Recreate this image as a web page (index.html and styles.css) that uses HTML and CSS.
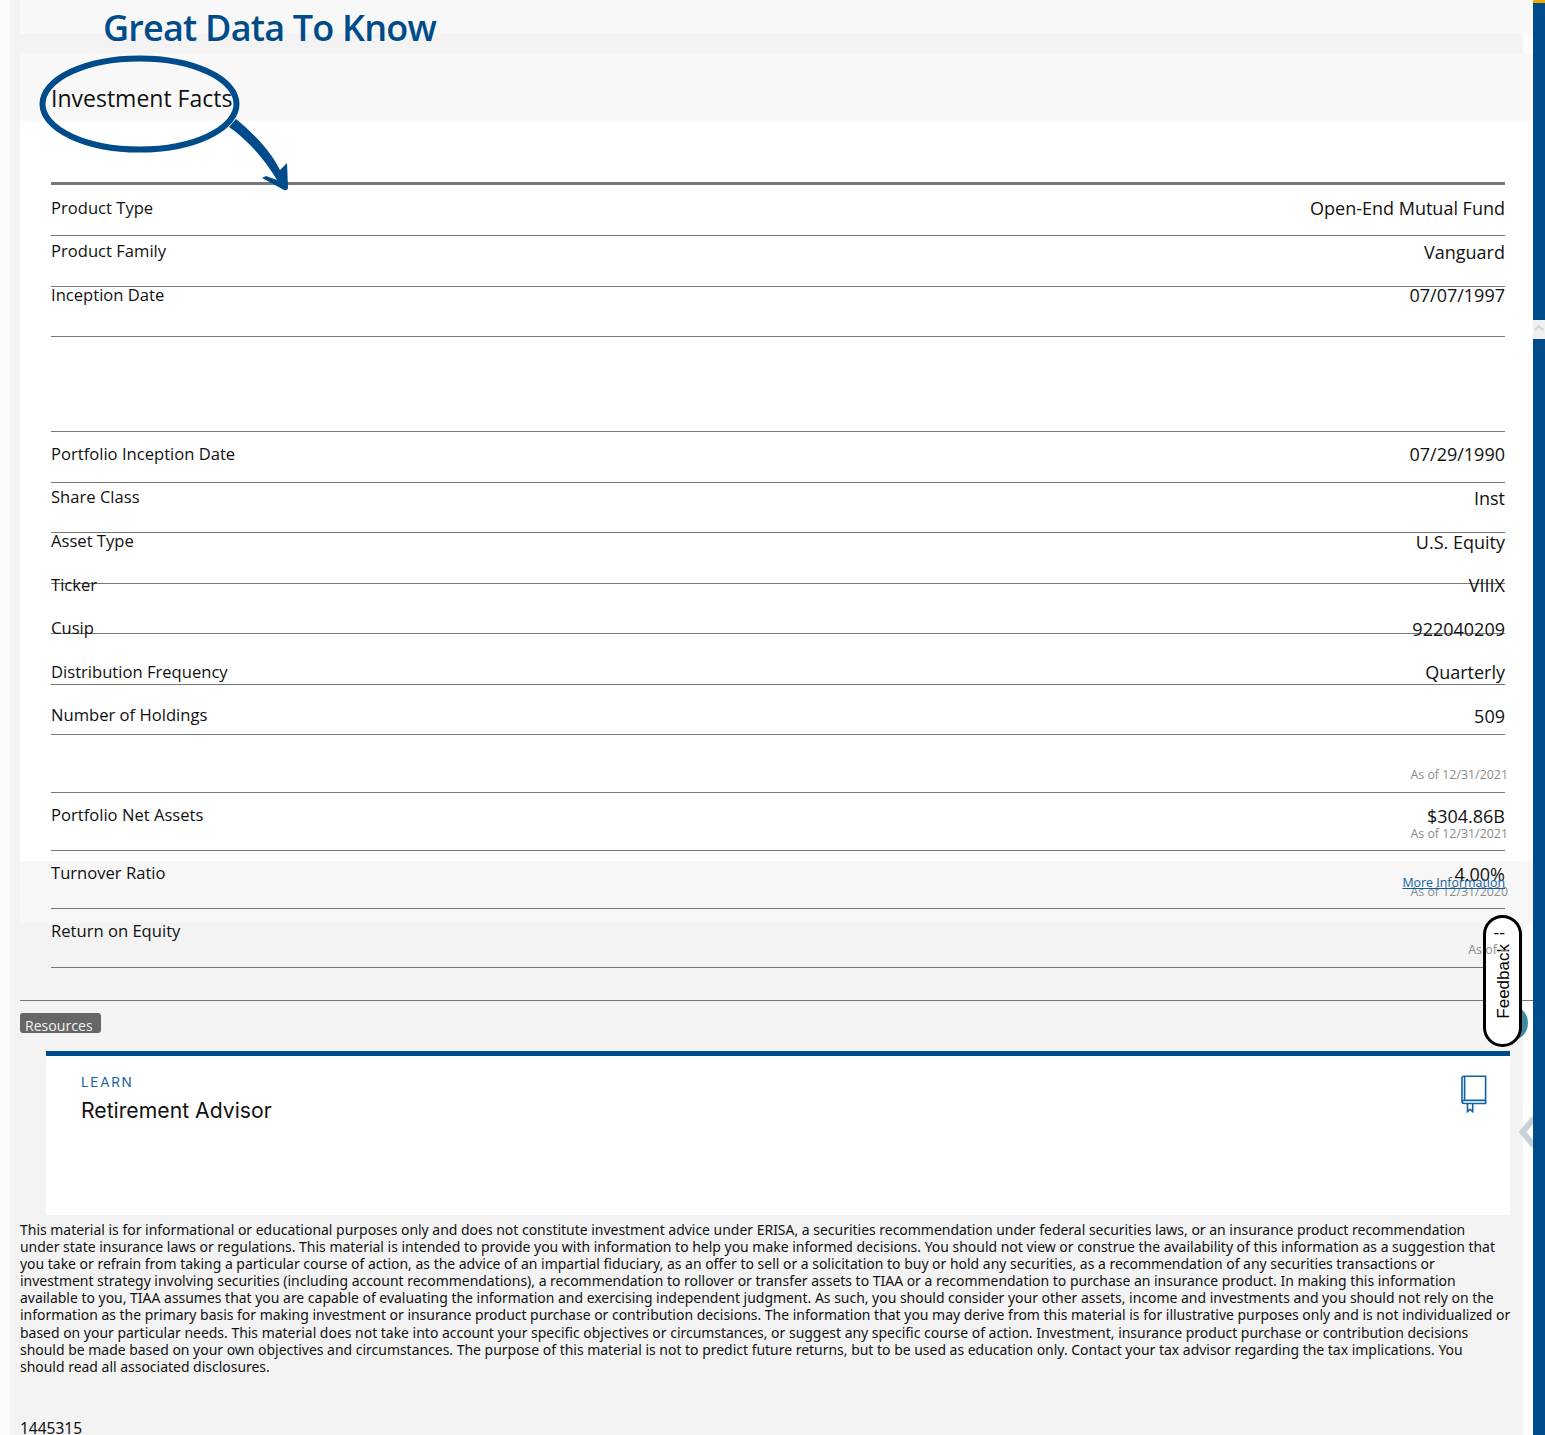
FILE: index.html
```html
<!DOCTYPE html>
<html lang="en">
<head>
<meta charset="utf-8">
<title>Investment Facts</title>
<link rel="stylesheet" href="styles.css">
</head>
<body>
<div class="shell">
  <div class="gutter"></div>
  <main class="page">
    <div class="band-top"></div>
    <div class="band-gap"><div class="band-gap-fill"></div></div>
    <header class="facts-head"><h2 class="facts-title">Investment Facts</h2></header>
    <section class="facts-body">
      <div class="stack">
        <div class="lines">
          <div class="line line-strong"></div>
          <div class="line h51"></div>
          <div class="line h50"></div>
          <div class="line h50"></div>
          <div class="line h95"></div>
          <div class="line h50"></div>
          <div class="line h50"></div>
          <div class="line h50"></div>
          <div class="line h50"></div>
          <div class="line h50"></div>
          <div class="line h50"></div>
          <div class="line h58"></div>
          <div class="line h58"></div>
          <div class="line h58"></div>
          <div class="line h59"></div>
        </div>
        <div class="rows">
          <div class="row"><span>Product Type</span><span class="val">Open-End Mutual Fund</span></div>
          <div class="row"><span>Product Family</span><span class="val">Vanguard</span></div>
          <div class="row r-gap-a"><span>Inception Date</span><span class="val">07/07/1997</span></div>
          <div class="row"><span>Portfolio Inception Date</span><span class="val">07/29/1990</span></div>
          <div class="row"><span>Share Class</span><span class="val">Inst</span></div>
          <div class="row"><span>Asset Type</span><span class="val">U.S. Equity</span></div>
          <div class="row"><span>Ticker</span><span class="val">VIIIX</span></div>
          <div class="row"><span>Cusip</span><span class="val">922040209</span></div>
          <div class="row"><span>Distribution Frequency</span><span class="val">Quarterly</span></div>
          <div class="row r-gap-b"><span>Number of Holdings</span><span class="val">509</span></div>
          <div class="asof asof-free">As of 12/31/2021</div>
          <div class="row r-58"><span>Portfolio Net Assets</span><div class="val-wrap"><span class="val">$304.86B</span><span class="asof">As of 12/31/2021</span></div></div>
          <div class="row r-58"><span>Turnover Ratio</span><div class="val-wrap"><span class="val">4.00%</span><a class="more" href="#">More Information</a><span class="asof">As of 12/31/2020</span></div></div>
          <div class="row r-58"><span>Return on Equity</span><div class="val-wrap"><span class="val">--</span><span class="asof">As of --</span></div></div>
        </div>
      </div>
    </section>
    <section class="lower">
      <div class="lower-rule"></div>
      <div class="tab">Resources</div>
      <article class="card">
        <div>
          <div class="eyebrow">LEARN</div>
          <h3 class="card-title">Retirement Advisor</h3>
        </div>
        <svg class="book" viewBox="0 0 26 38" width="26" height="38" fill="none" stroke="#0f62a5" stroke-width="1.6">
          <path d="M3 1.2h21.6v27.3H3.2c-1.2 0-2.2-1-2.2-2.2V3.2C1 2.1 1.9 1.2 3 1.2z"/>
          <path d="M3.6 1.4v24.4"/>
          <path d="M1.4 26c.4-.5 1-.6 1.6-.6h21.4"/>
          <path d="M6.5 28.6v8l2.6-2.2 2.6 2.2v-8"/>
        </svg>
      </article>
      <div class="legal">This material is for informational or educational purposes only and does not constitute investment advice under ERISA, a securities recommendation under federal securities laws, or an insurance product recommendation<br>under state insurance laws or regulations. This material is intended to provide you with information to help you make informed decisions. You should not view or construe the availability of this information as a suggestion that<br>you take or refrain from taking a particular course of action, as the advice of an impartial fiduciary, as an offer to sell or a solicitation to buy or hold any securities, as a recommendation of any securities transactions or<br>investment strategy involving securities (including account recommendations), a recommendation to rollover or transfer assets to TIAA or a recommendation to purchase an insurance product. In making this information<br>available to you, TIAA assumes that you are capable of evaluating the information and exercising independent judgment. As such, you should consider your other assets, income and investments and you should not rely on the<br>information as the primary basis for making investment or insurance product purchase or contribution decisions. The information that you may derive from this material is for illustrative purposes only and is not individualized or<br>based on your particular needs. This material does not take into account your specific objectives or circumstances, or suggest any specific course of action. Investment, insurance product purchase or contribution decisions<br>should be made based on your own objectives and circumstances. The purpose of this material is not to predict future returns, but to be used as education only. Contact your tax advisor regarding the tax implications. You<br>should read all associated disclosures.</div>
      <div class="code">1445315</div>
    </section>
  </main>
  <aside class="rail"><div class="rail-gold"></div><div class="rail-thumb"><svg viewBox="0 0 12 8" width="12" height="8" fill="none" stroke="#d5d5d5" stroke-width="2"><path d="M2 7l4-4 4 4"/></svg></div></aside>
</div>

<h1 class="callout">Great Data To Know</h1>
<svg class="circle-note" viewBox="38 54 260 140" width="260" height="140" fill="none">
  <ellipse cx="139.500" cy="104" rx="97" ry="45.500" stroke="#004c8a" stroke-width="6"/>
  <path d="M236 119C255 135 270 150 280 170L287 163L288 187Q288 191 284 190L262 178L266 176L277 180C265 160 248 140 229 127Z" fill="#004c8a"/>
</svg>
<div class="teal-dot"></div>
<button class="feedback"><span>Feedback</span></button>
<svg class="chev" viewBox="0 0 14 30" width="14" height="30" fill="none" stroke="#c9d1d7" stroke-width="6"><path d="M16 0L3.500 15L16 30"/></svg>
</body>
</html>
```
FILE: styles.css
```css
* { box-sizing: border-box; }
html, body { margin: 0; padding: 0; }
body {
  width: 1545px;
  height: 1435px;
  overflow: hidden;
  background: #fff;
  color: #111;
  font-family: "Open Sans", "Noto Sans", sans-serif;
  position: relative;
}
.shell { display: flex; height: 1435px; }
.gutter { width: 10px; background: #fbfbfb; flex: none; }
.page { width: 1523px; flex: none; background: linear-gradient(#f3f3f3, #f3f3f3) 0 0 / 1513px 100% no-repeat; padding-left: 10px; display: flex; flex-direction: column; }
.page > * { flex: none; }
.rail { width: 12px; flex: none; background: #004c8a; }
.rail-gold { height: 3px; background: #f0ab00; }
.rail-thumb { margin-top: 317px; height: 19px; background: #f1f1f1; display: flex; justify-content: center; padding-top: 3px; }
.band-top { height: 34px; background: #f8f8f8; }
.band-gap { height: 19px; background: #fff; }
.band-gap-fill { height: 19px; width: 1503px; background: #f3f3f3; }
.facts-head { height: 68px; background: #f8f8f8; padding: 28px 0 0 31px; }
.facts-title { margin: 0; font-size: 23px; font-weight: 400; line-height: 34px; color: #111; }

.facts-body { height: 802px; background: linear-gradient(#fff 740px, #f7f7f7 740px); padding: 0 28px 0 31px; }
.stack { display: grid; }
.lines, .rows { grid-area: 1 / 1; }
.lines { padding-top: 61px; }
.line { border-bottom: 1px solid #777; }
.line-strong { height: 3px; background: #777; border: 0; }
.h50 { height: 50.5px; }
.h51 { height: 51px; }
.h95 { height: 95px; }
.h58 { height: 58px; }
.h59 { height: 59px; }

.rows { position: relative; z-index: 5; padding-top: 74.7px; font-size: 16.6px; line-height: 24px; }
.row { display: flex; justify-content: space-between; height: 43.6px; }
.r-gap-a { height: 159px; }
.r-gap-b { height: 50px; }
.r-58 { height: 58px; }
.val { font-size: 18px; text-align: right; display: block; padding-top: .5px; }
.val-wrap { position: relative; display: flex; flex-direction: column; align-items: flex-end; }
.asof { font-size: 12.4px; line-height: 14px; color: #8a8a8a; margin-right: -3px; display: block; margin-top: -1px; }
.asof-free { height: 50px; text-align: right; margin-top: 0; padding-top: 15px; }
.more { position: absolute; right: 0; top: 15px; font-size: 12.4px; line-height: 14px; color: #0f5f9f; text-decoration: underline; white-space: nowrap; }

.lower { flex: 1; position: relative; padding-top: 77px; }
.lower-rule { height: 1px; background: #777; }
.tab { width: 81px; height: 20px; margin-top: 12px; background: #666; color: #f0f0f0; border-radius: 3px; font-size: 14.1px; line-height: 25px; padding-left: 5px; }
.card { margin: 18px 0 0 26px; width: 1464px; height: 164px; background: #fff; border-top: 5px solid #004c8a; padding: 17px 23px 0 35px; display: flex; justify-content: space-between; align-items: flex-start; }
.eyebrow { font-family: Inter, sans-serif; font-size: 13.5px; letter-spacing: 1.7px; line-height: 18px; color: #1a5f9e; }
.card-title { margin: 3px 0 0; font-family: Inter, sans-serif; font-weight: 400; font-size: 21.2px; line-height: 32px; color: #111; }
.book { margin-top: 2px; flex: none; }
.legal { padding-top: 6px; font-family: "Noto Sans", sans-serif; font-size: 13.96px; line-height: 17.1px; white-space: nowrap; color: #111; }
.code { margin-top: 45px; font-family: "Noto Sans", sans-serif; font-size: 15.5px; line-height: 17px; }

.callout { position: absolute; left: 103px; top: 5px; margin: 0; font-size: 36px; font-weight: 600; line-height: 46px; letter-spacing: -.8px; color: #004c8a; z-index: 6; white-space: nowrap; }
.circle-note { position: absolute; left: 38px; top: 54px; z-index: 6; }
.teal-dot { position: absolute; left: 1492px; top: 1005px; width: 36px; height: 36px; border-radius: 50%; background: #3d8a9d; z-index: 3; }
.feedback { position: absolute; left: 1483px; top: 915px; width: 39px; height: 132px; padding: 0 0 0 3px; border: 3px solid #000; border-radius: 20px; background: #fff; z-index: 4; display: flex; align-items: flex-end; justify-content: center; }
.feedback span { writing-mode: vertical-rl; transform: rotate(180deg); font-family: "Liberation Sans", sans-serif; font-size: 17px; line-height: 20px; color: #000; padding-top: 25px; }
.chev { position: absolute; left: 1519px; top: 1117px; z-index: 3; }
```
